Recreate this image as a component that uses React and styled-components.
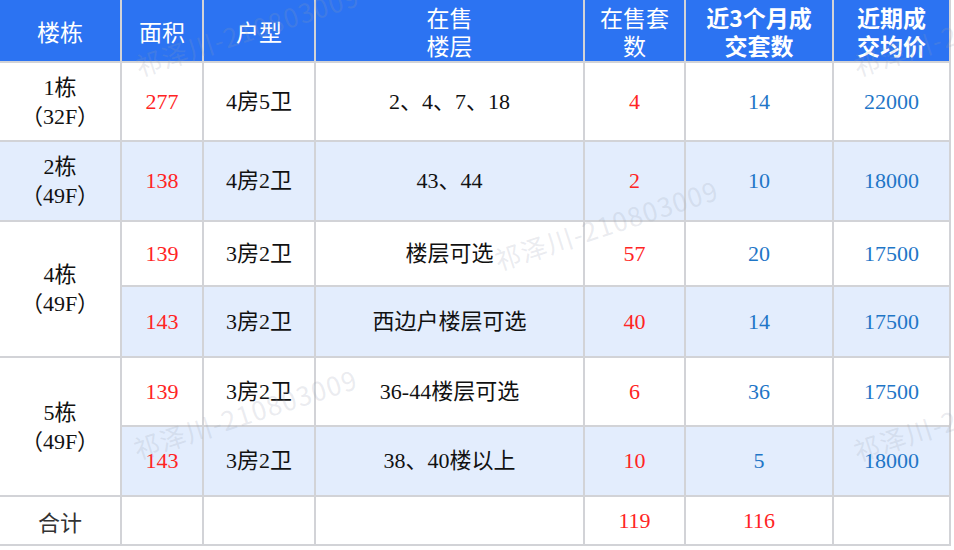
import React from "react";
import styled, { createGlobalStyle } from "styled-components";

const Global = createGlobalStyle`
  html, body { margin: 0; padding: 0; background: #ffffff; }
  body { font-family: "Noto Sans CJK SC", "Noto Sans", sans-serif; }
`;

const COLS = [120, 80, 110, 267, 99, 146, 115];
const ROWS = [61, 77, 78, 63, 69, 67, 68, 47];

const Page = styled.div`
  position: relative;
  width: 954px;
  height: 550px;
  overflow: hidden;
  background: #ffffff;
`;

const Sheet = styled.div`
  display: grid;
  grid-template-columns: ${COLS.map((c) => c + "px").join(" ")};
  grid-template-rows: ${ROWS.map((r) => r + "px").join(" ")};
  gap: 2px;
  padding: 0 2px 2px 0;
  width: fit-content;
  background: #d2d3d7;
`;

const HeadCell = styled.div`
  display: flex;
  align-items: center;
  justify-content: center;
  text-align: center;
  background: #2c73f2;
  color: #ffffff;
  font-family: "Noto Sans CJK SC", "Noto Sans", sans-serif;
  font-size: 23px;
  font-weight: ${(p) => (p.$bold ? 700 : 400)};
  line-height: 28px;
`;

const toneColor = {
  red: "#ff2424",
  blue: "#1f76c7",
  ink: "#111111",
  gray: "#333333",
};

const Cell = styled.div`
  display: flex;
  align-items: center;
  justify-content: center;
  text-align: center;
  grid-row: span ${(p) => p.$span || 1};
  background: ${(p) => (p.$shade ? "#e3edfd" : "#ffffff")};
  color: ${(p) => toneColor[p.$tone || "ink"]};
  font-family: ${(p) =>
    p.$sans
      ? '"Noto Sans CJK SC", "Noto Sans", sans-serif'
      : '"Liberation Serif", "Noto Sans CJK SC", serif'};
  font-size: 22px;
  line-height: ${(p) => (p.$tall ? "29px" : "28px")};
`;

const Stack = styled.div`
  display: flex;
  flex-direction: column;
  align-items: center;
`;

const Watermarks = styled.div`
  position: absolute;
  inset: 0;
  pointer-events: none;
`;

const Mark = styled.span`
  position: absolute;
  white-space: nowrap;
  font-family: "Noto Sans CJK SC", "Noto Sans", sans-serif;
  font-size: 26px;
  line-height: 26px;
  letter-spacing: 1.3px;
  color: rgba(150, 158, 175, 0.2);
  transform-origin: 0 100%;
  transform: rotate(-18deg);
`;

const headers = [
  { t: ["楼栋"] },
  { t: ["面积"] },
  { t: ["户型"] },
  { t: ["在售", "楼层"] },
  { t: ["在售套", "数"] },
  { t: ["近3个月成", "交套数"], bold: true },
  { t: ["近期成", "交均价"], bold: true },
];

const groups = [
  {
    name: "1栋",
    floors: "（32F）",
    shade: false,
    items: [
      { area: 277, type: "4房5卫", sale: "2、4、7、18", left: 4, deal: 14, price: 22000, shade: false },
    ],
  },
  {
    name: "2栋",
    floors: "（49F）",
    shade: true,
    items: [
      { area: 138, type: "4房2卫", sale: "43、44", left: 2, deal: 10, price: 18000, shade: true },
    ],
  },
  {
    name: "4栋",
    floors: "（49F）",
    shade: false,
    items: [
      { area: 139, type: "3房2卫", sale: "楼层可选", left: 57, deal: 20, price: 17500, shade: false },
      { area: 143, type: "3房2卫", sale: "西边户楼层可选", left: 40, deal: 14, price: 17500, shade: true },
    ],
  },
  {
    name: "5栋",
    floors: "（49F）",
    shade: false,
    items: [
      { area: 139, type: "3房2卫", sale: "36-44楼层可选", left: 6, deal: 36, price: 17500, shade: false },
      { area: 143, type: "3房2卫", sale: "38、40楼以上", left: 10, deal: 5, price: 18000, shade: true },
    ],
  },
];

const marks = [
  { x: 140, y: 79 },
  { x: 858, y: 79 },
  { x: 499, y: 273 },
  { x: 138, y: 462 },
  { x: 858, y: 464 },
];

export default function App() {
  return (
    <>
      <Global />
      <Page>
        <Sheet>
          {headers.map((h, i) => (
            <HeadCell key={"h" + i} $bold={h.bold}>
              <Stack>
                {h.t.map((line) => (
                  <span key={line}>{line}</span>
                ))}
              </Stack>
            </HeadCell>
          ))}
          {groups.map((g) =>
            g.items.map((it, j) => (
              <React.Fragment key={g.name + j}>
                {j === 0 && (
                  <Cell $span={g.items.length} $shade={g.shade} $tall>
                    <Stack>
                      <span>{g.name}</span>
                      <span>{g.floors}</span>
                    </Stack>
                  </Cell>
                )}
                <Cell $shade={it.shade} $tone="red">{it.area}</Cell>
                <Cell $shade={it.shade}>{it.type}</Cell>
                <Cell $shade={it.shade}>{it.sale}</Cell>
                <Cell $shade={it.shade} $tone="red">{it.left}</Cell>
                <Cell $shade={it.shade} $tone="blue">{it.deal}</Cell>
                <Cell $shade={it.shade} $tone="blue">{it.price}</Cell>
              </React.Fragment>
            ))
          )}
          <Cell $sans $tone="gray">合计</Cell>
          <Cell />
          <Cell />
          <Cell />
          <Cell $tone="red">119</Cell>
          <Cell $tone="red">116</Cell>
          <Cell />
        </Sheet>
        <Watermarks>
          {marks.map((m, i) => (
            <Mark key={i} style={{ left: m.x, top: m.y - 26 }}>
              祁泽川-210803009
            </Mark>
          ))}
        </Watermarks>
      </Page>
    </>
  );
}
